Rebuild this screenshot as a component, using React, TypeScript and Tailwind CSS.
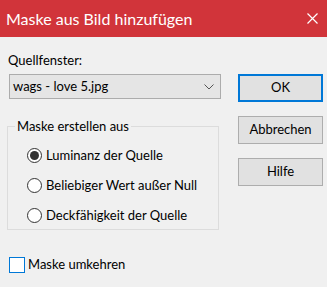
const font = { fontFamily: '"Segoe UI", Lato, "Noto Sans", sans-serif' };

const Radio = ({ checked, label }: { checked?: boolean; label: string }) => (
  <div className="flex items-center h-[30px]">
    <span className="w-[15px] h-[15px] rounded-full border border-[#333] bg-white flex items-center justify-center mr-[4px]">
      {checked && <span className="w-[9px] h-[9px] rounded-full bg-[#333]" />}
    </span>
    <span className="text-[13px] text-black leading-none">{label}</span>
  </div>
);

const Btn = ({ label, primary }: { label: string; primary?: boolean }) => (
  <button
    className={
      "w-[85px] h-[28px] bg-[#e1e1e1] text-[13px] text-black " +
      (primary ? "border-2 border-[#0078d7]" : "border border-[#adadad]")
    }
  >
    {label}
  </button>
);

export default function App() {
  return (
    <div className="w-[327px] h-[287px] bg-[#f0f0f0] flex flex-col text-black" style={font}>
      <div className="h-[37px] bg-[#d1343a] flex items-center justify-between pl-[6px] pr-[9px]">
        <span className="text-white text-[16px]">Maske aus Bild hinzufügen</span>
        <svg width="11" height="11" viewBox="0 0 11 11" stroke="white" strokeWidth="1.2">
          <path d="M0.5 0.5 L10.5 10.5 M10.5 0.5 L0.5 10.5" />
        </svg>
      </div>
      <div className="flex flex-1">
        <div className="w-[230px] pl-[7px] flex flex-col">
          <div className="text-[13px] mt-[14px] ml-[1px] leading-[18px]">Quellfenster:</div>
          <div className="mt-[5px] ml-[2px] w-[212px] h-[25px] bg-[#e5e5e5] border border-[#acacac] flex items-center justify-between pl-[3px] pr-[6px]">
            <span className="text-[13px]">wags - love 5.jpg</span>
            <svg width="10" height="6" viewBox="0 0 10 6" fill="none" stroke="#555" strokeWidth="1">
              <path d="M0.5 0.5 L5 5 L9.5 0.5" />
            </svg>
          </div>
          <fieldset className="mt-[19px] w-[212px] h-[112px] border border-[#dcdcdc]">
            <legend className="ml-[7px] px-[2px] text-[13px] leading-[16px]">Maske erstellen aus</legend>
            <div className="pl-[19px] pt-[6px]">
              <Radio checked label="Luminanz der Quelle" />
              <Radio label="Beliebiger Wert außer Null" />
              <Radio label="Deckfähigkeit der Quelle" />
            </div>
          </fieldset>
          <label className="flex items-center mt-[25px] ml-[2px]">
            <span className="w-[16px] h-[16px] bg-white border border-[#0078d7] mr-[3px]" />
            <span className="text-[13px]">Maske umkehren</span>
          </label>
        </div>
        <div className="flex flex-col gap-[14px] pt-[37px] pl-[8px]">
          <Btn primary label="OK" />
          <Btn label="Abbrechen" />
          <Btn label="Hilfe" />
        </div>
      </div>
    </div>
  );
}
